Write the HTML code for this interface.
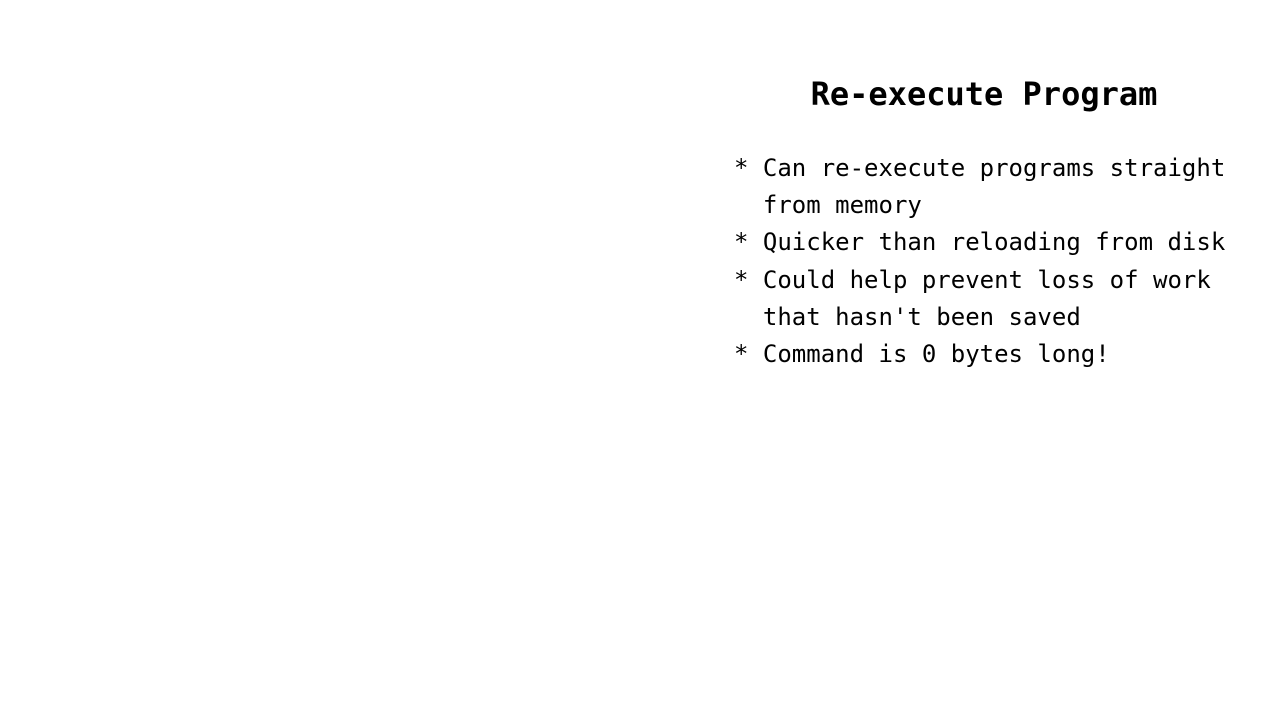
<!DOCTYPE html>
<html><head><meta charset="utf-8"><style>
html,body{margin:0;padding:0;background:#fff;width:1280px;height:720px;overflow:hidden}
.t{position:absolute;left:684px;width:600px;top:74px;text-align:center;font:bold 32px/40px "DejaVu Sans Mono",monospace;color:#000;white-space:pre}
.b{position:absolute;left:734px;top:150px;font:24px/37.2px "DejaVu Sans Mono",monospace;color:#000;white-space:pre;margin:0}
</style></head><body>
<div class="t">Re-execute Program</div>
<pre class="b">* Can re-execute programs straight
  from memory
* Quicker than reloading from disk
* Could help prevent loss of work
  that hasn't been saved
* Command is 0 bytes long!</pre>
</body></html>
